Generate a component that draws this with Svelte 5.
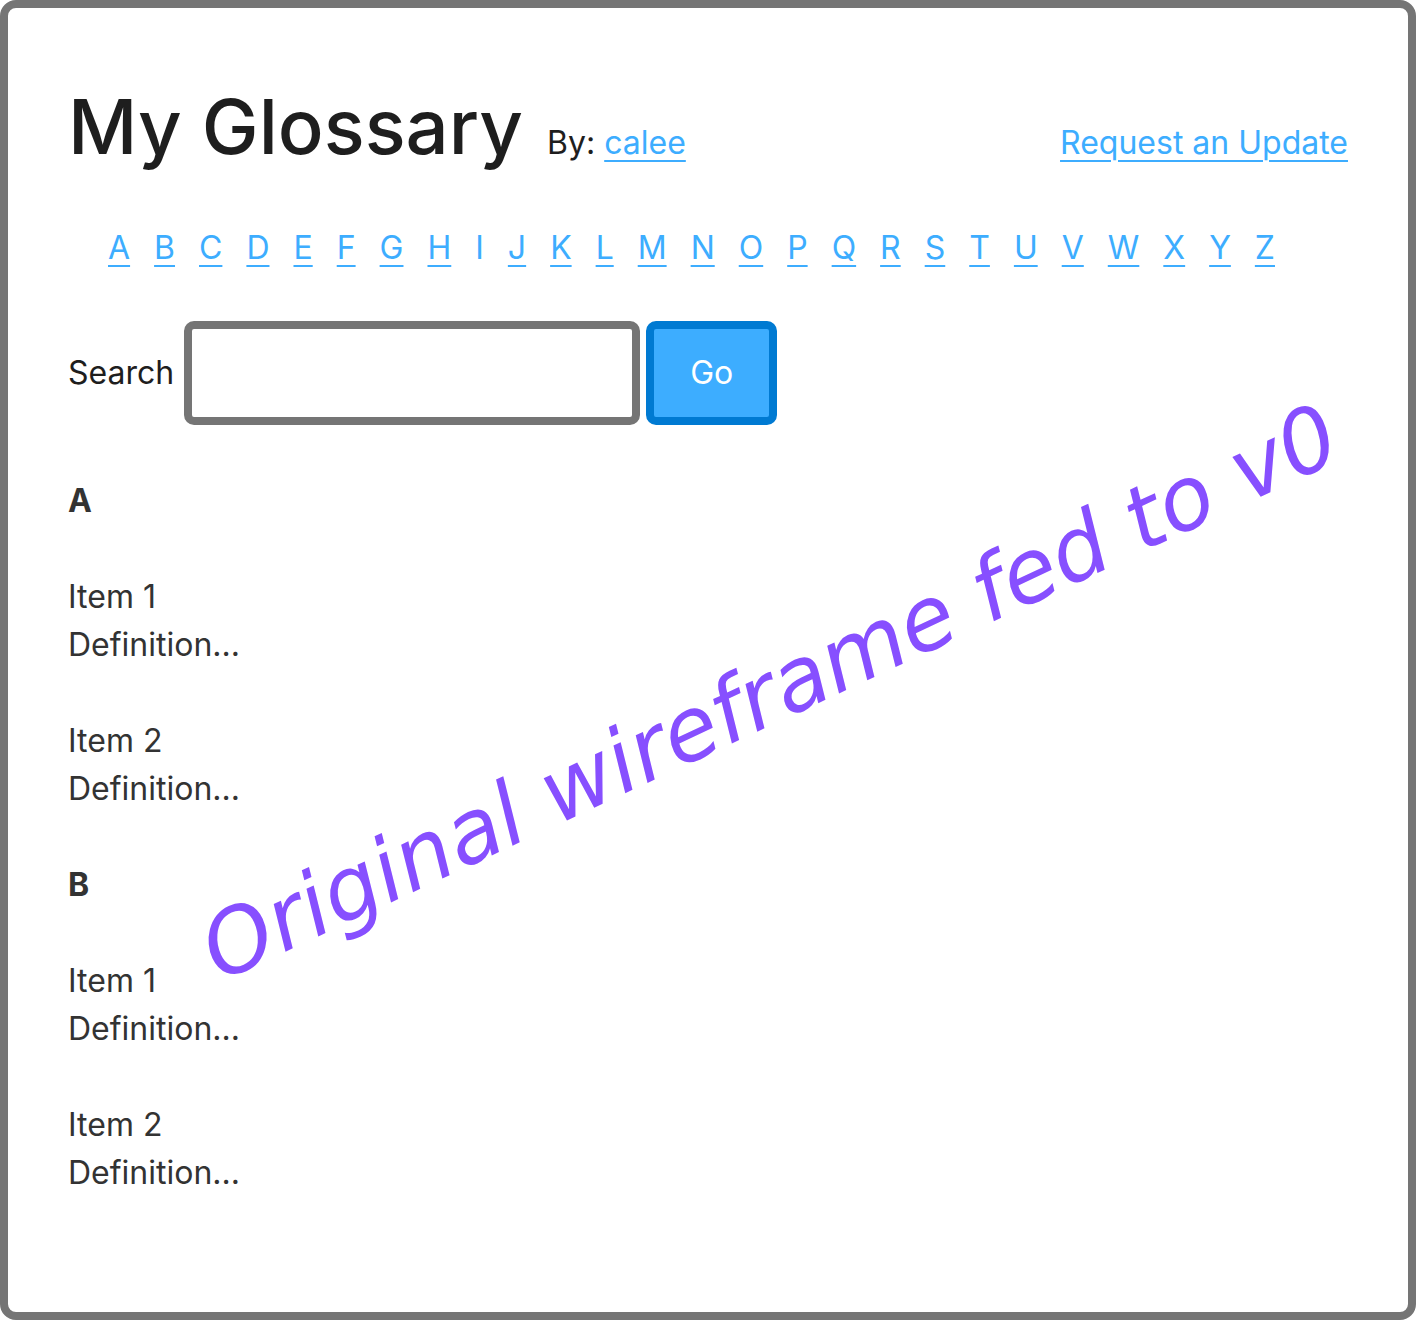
<script>
  const letters = 'ABCDEFGHIJKLMNOPQRSTUVWXYZ'.split('');
  const sections = [
    { letter: 'A', items: ['Item 1', 'Item 2'] },
    { letter: 'B', items: ['Item 1', 'Item 2'] }
  ];
  let query = $state('');
</script>

<main class="frame">
  <header class="header">
    <h1>My Glossary</h1>
    <p class="byline">By: <a href="#calee">calee</a></p>
    <a class="request" href="#request">Request an Update</a>
  </header>

  <nav class="letters" aria-label="Alphabet">
    {#each letters as letter}
      <a href={'#' + letter} class:plain={letter === 'I'}>{letter}</a>
    {/each}
  </nav>

  <form class="search" onsubmit={(e) => e.preventDefault()}>
    <label for="search">Search</label>
    <input id="search" type="text" bind:value={query} />
    <button type="submit">Go</button>
  </form>

  {#each sections as section}
    <section class="section" id={section.letter}>
      <h2>{section.letter}</h2>
      <dl>
        {#each section.items as item}
          <div class="entry">
            <dt>{item}</dt>
            <dd>Definition...</dd>
          </div>
        {/each}
      </dl>
    </section>
  {/each}

  <p class="note">Original wireframe fed to v0</p>
</main>

<style>
  :global(body) {
    background: #fff;
  }

  .frame {
    position: relative;
    box-sizing: border-box;
    min-height: 100vh;
    padding: 68px 60px 60px;
    border: 8px solid #757575;
    border-radius: 16px;
    overflow: hidden;
    color: #1e1e1e;
    font: 400 32px/48px Inter, 'Liberation Sans', sans-serif;
  }

  h1,
  h2,
  p,
  dl,
  dd {
    margin: 0;
  }

  a {
    color: #3dadff;
    text-decoration: underline;
    text-decoration-thickness: 2px;
    text-underline-offset: 6px;
  }

  .header {
    display: flex;
    align-items: baseline;
    gap: 24px;
  }

  h1 {
    font-size: 76px;
    font-weight: 500;
    line-height: 100px;
  }

  .request {
    margin-left: auto;
  }

  .letters {
    display: flex;
    flex-wrap: wrap;
    column-gap: 24px;
    margin-top: 48px;
    padding-left: 40px;
  }

  .plain {
    text-decoration: none;
  }

  .search {
    display: flex;
    align-items: center;
    margin: 49px 0 52px;
  }

  .search label {
    margin-right: 10px;
  }

  input,
  button {
    box-sizing: border-box;
    height: 104px;
    border: 8px solid #757575;
    border-radius: 10px;
    font: inherit;
  }

  input {
    width: 456px;
    min-width: 0;
    margin: 0 6px 0 0;
    padding: 0 16px;
    background: #fff;
    color: inherit;
  }

  button {
    padding: 0 36px;
    border-color: #007ad2;
    background: #3dadff;
    color: #fff;
  }

  .section {
    margin-top: 48px;
    color: #333;
  }

  h2 {
    font-size: 32px;
    font-weight: 700;
    line-height: 48px;
  }

  .entry {
    margin-top: 48px;
  }

  .note {
    position: absolute;
    left: 222px;
    top: 888px;
    color: #874fff;
    font: italic 400 88px/108px 'DejaVu Sans', sans-serif;
    white-space: nowrap;
    transform: rotate(-25deg);
    transform-origin: left bottom;
    pointer-events: none;
  }
</style>
